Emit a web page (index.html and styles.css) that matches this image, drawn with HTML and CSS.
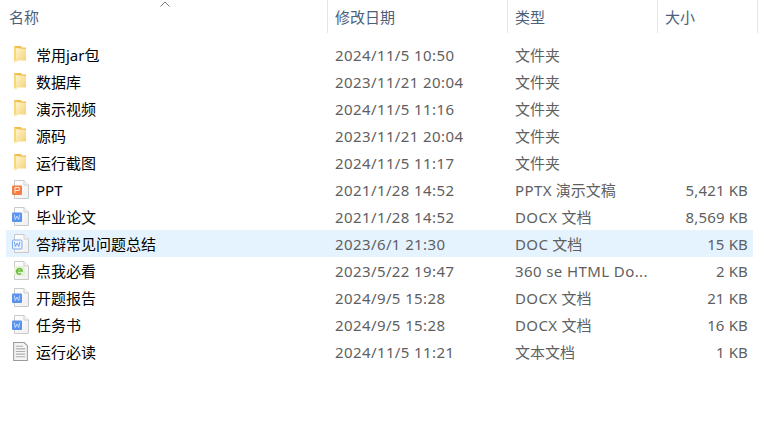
FILE: index.html
```html
<!DOCTYPE html>
<html lang="zh-CN">
<head>
<meta charset="utf-8">
<title>文件列表</title>
<link rel="stylesheet" href="styles.css">
</head>
<body>
<svg class="defs" width="0" height="0" aria-hidden="true">
  <defs>
    <linearGradient id="fold" x1="0" y1="0" x2="1" y2="1">
      <stop offset="0" stop-color="#fff6cf"/>
      <stop offset="1" stop-color="#f4cf72"/>
    </linearGradient>
    <linearGradient id="pg" x1="0" y1="0" x2="1" y2="1">
      <stop offset="0" stop-color="#ffffff"/>
      <stop offset="1" stop-color="#efefef"/>
    </linearGradient>
    <symbol id="folder" viewBox="0 0 12 17">
      <path d="M0 0h7l1 1.500h4V14H0z" fill="#f0c04e"/>
      <path d="M1.500 2l10.500 1V14.500H3.500L1.500 17z" fill="url(#fold)"/>
      <path d="M.7 .5V15.500" stroke="#f7d67a" stroke-width="1.400" fill="none"/>
    </symbol>
    <symbol id="page" viewBox="0 0 16 19">
      <path d="M1.500 .5h9.500l4.500 4.500v13.500h-14z" fill="url(#pg)" stroke="#c9c9c9"/>
      <path d="M11 .5v4.500h4.500" fill="#f4f4f4" stroke="#cfcfcf"/>
    </symbol>
    <symbol id="ppt" viewBox="0 0 17 19">
      <use href="#page" x="1" width="16" height="19"/>
      <rect y="5.500" width="10" height="9.500" rx="1" fill="#f47f46"/>
      <path d="M3 13V7.500h3a1.400 1.400 0 0 1 0 3H3" stroke="#fde4d6" stroke-width="1.100" fill="none"/>
    </symbol>
    <symbol id="word" viewBox="0 0 17 19">
      <use href="#page" x="1" width="16" height="19"/>
      <rect y="5.500" width="10" height="9.500" rx="1" fill="#5a93ee"/>
      <path d="M2.200 7.500l1.100 5 1.700-3.500 1.700 3.500 1.100-5" stroke="#dfeafc" stroke-width=".8" fill="none"/>
    </symbol>
    <symbol id="wordo" viewBox="0 0 17 19">
      <use href="#page" x="1" width="16" height="19"/>
      <rect x=".5" y="6" width="9.500" height="9" rx="1" fill="#eaf2fd" stroke="#7eabf0"/>
      <path d="M2.400 8l1 4.500 1.700-3.500 1.700 3.500 1-4.500" stroke="#5a93ee" stroke-width=".8" fill="none"/>
    </symbol>
    <symbol id="html" viewBox="0 0 17 19">
      <use href="#page" x="1" width="16" height="19"/>
      <rect x="2" y="5" width="11" height="10" rx="2" fill="#e6f2da"/>
      <path d="M4.800 10h5.400a2.800 2.800 0 1 0-1 2.500" stroke="#6bbd3a" stroke-width="1.600" fill="none"/>
    </symbol>
    <symbol id="text" viewBox="0 0 16 18">
      <path d="M1.500 .5h10l3 3v14h-13z" fill="#f6f6f6" stroke="#9a9a9a"/>
      <path d="M3.500 4h7M3.500 6.500h9M3.500 9h9M3.500 11.500h9M3.500 14h9" stroke="#adadad"/>
    </symbol>
  </defs>
</svg>
<main class="explorer">
  <header class="columns">
    <div class="col col-name">名称<svg class="sort" width="10" height="6" viewBox="0 0 10 6"><path d="M.5 5.500l4.500-4.500 4.500 4.500" fill="none" stroke="#767676"/></svg></div>
    <div class="col col-date">修改日期</div>
    <div class="col col-type">类型</div>
    <div class="col col-size">大小</div>
  </header>
  <section class="rows">
    <div class="row"><span class="name"><svg class="icon folder"><use href="#folder"/></svg>常用jar包</span><span class="date">2024/11/5 10:50</span><span class="type">文件夹</span><span class="size"></span></div>
    <div class="row"><span class="name"><svg class="icon folder"><use href="#folder"/></svg>数据库</span><span class="date">2023/11/21 20:04</span><span class="type">文件夹</span><span class="size"></span></div>
    <div class="row"><span class="name"><svg class="icon folder"><use href="#folder"/></svg>演示视频</span><span class="date">2024/11/5 11:16</span><span class="type">文件夹</span><span class="size"></span></div>
    <div class="row"><span class="name"><svg class="icon folder"><use href="#folder"/></svg>源码</span><span class="date">2023/11/21 20:04</span><span class="type">文件夹</span><span class="size"></span></div>
    <div class="row"><span class="name"><svg class="icon folder"><use href="#folder"/></svg>运行截图</span><span class="date">2024/11/5 11:17</span><span class="type">文件夹</span><span class="size"></span></div>
    <div class="row"><span class="name"><svg class="icon"><use href="#ppt"/></svg>PPT</span><span class="date">2021/1/28 14:52</span><span class="type"><span class="latin">PPTX</span> 演示文稿</span><span class="size">5,421 KB</span></div>
    <div class="row"><span class="name"><svg class="icon"><use href="#word"/></svg>毕业论文</span><span class="date">2021/1/28 14:52</span><span class="type"><span class="latin">DOCX</span> 文档</span><span class="size">8,569 KB</span></div>
    <div class="row selected"><span class="name"><svg class="icon"><use href="#wordo"/></svg>答辩常见问题总结</span><span class="date">2023/6/1 21:30</span><span class="type"><span class="latin">DOC</span> 文档</span><span class="size">15 KB</span></div>
    <div class="row"><span class="name"><svg class="icon"><use href="#html"/></svg>点我必看</span><span class="date">2023/5/22 19:47</span><span class="type"><span class="latin">360 se HTML Do...</span></span><span class="size">2 KB</span></div>
    <div class="row"><span class="name"><svg class="icon"><use href="#word"/></svg>开题报告</span><span class="date">2024/9/5 15:28</span><span class="type"><span class="latin">DOCX</span> 文档</span><span class="size">21 KB</span></div>
    <div class="row"><span class="name"><svg class="icon"><use href="#word"/></svg>任务书</span><span class="date">2024/9/5 15:28</span><span class="type"><span class="latin">DOCX</span> 文档</span><span class="size">16 KB</span></div>
    <div class="row"><span class="name"><svg class="icon"><use href="#text"/></svg>运行必读</span><span class="date">2024/11/5 11:21</span><span class="type">文本文档</span><span class="size">1 KB</span></div>
  </section>
</main>
</body>
</html>
```
FILE: styles.css
```css
html, body {
  margin: 0;
  padding: 0;
  background: #fff;
  overflow: hidden;
}
body {
  width: 764px;
  height: 435px;
  font-family: "Noto Sans", "Noto Sans CJK SC", sans-serif;
  font-size: 15px;
  color: #000;
}
.defs {
  position: absolute;
}
.columns {
  display: grid;
  grid-template-columns: 328px 180px 150px 100px;
  height: 33px;
  color: #4c607a;
}
.col {
  position: relative;
  display: flex;
  align-items: center;
  height: 33px;
  padding: 0 0 1px 7px;
  box-sizing: border-box;
  border-right: 1px solid #e5e5e5;
}
.col-name {
  padding-left: 9px;
}
.sort {
  position: absolute;
  left: 160px;
  top: 1px;
}
.rows {
  display: flex;
  flex-direction: column;
  padding: 8px 0 0 6px;
}
.row {
  display: grid;
  grid-template-columns: 322px 180px 150px 90px;
  align-items: center;
  width: 747px;
  height: 27px;
}
.row.selected {
  background: #e5f3ff;
}
.name {
  display: flex;
  align-items: center;
}
.icon {
  flex: none;
  width: 17px;
  height: 19px;
  margin: 0 7px 0 6px;
}
.folder {
  width: 12px;
  height: 17px;
  margin: 0 10px 0 8px;
}
.date, .type, .size {
  color: #5f5f5f;
}
.date {
  padding-left: 7px;
  letter-spacing: .4px;
}
.type {
  padding-left: 7px;
  white-space: nowrap;
}
.latin {
  letter-spacing: .4px;
}
.size {
  text-align: right;
  letter-spacing: .15px;
}
```
